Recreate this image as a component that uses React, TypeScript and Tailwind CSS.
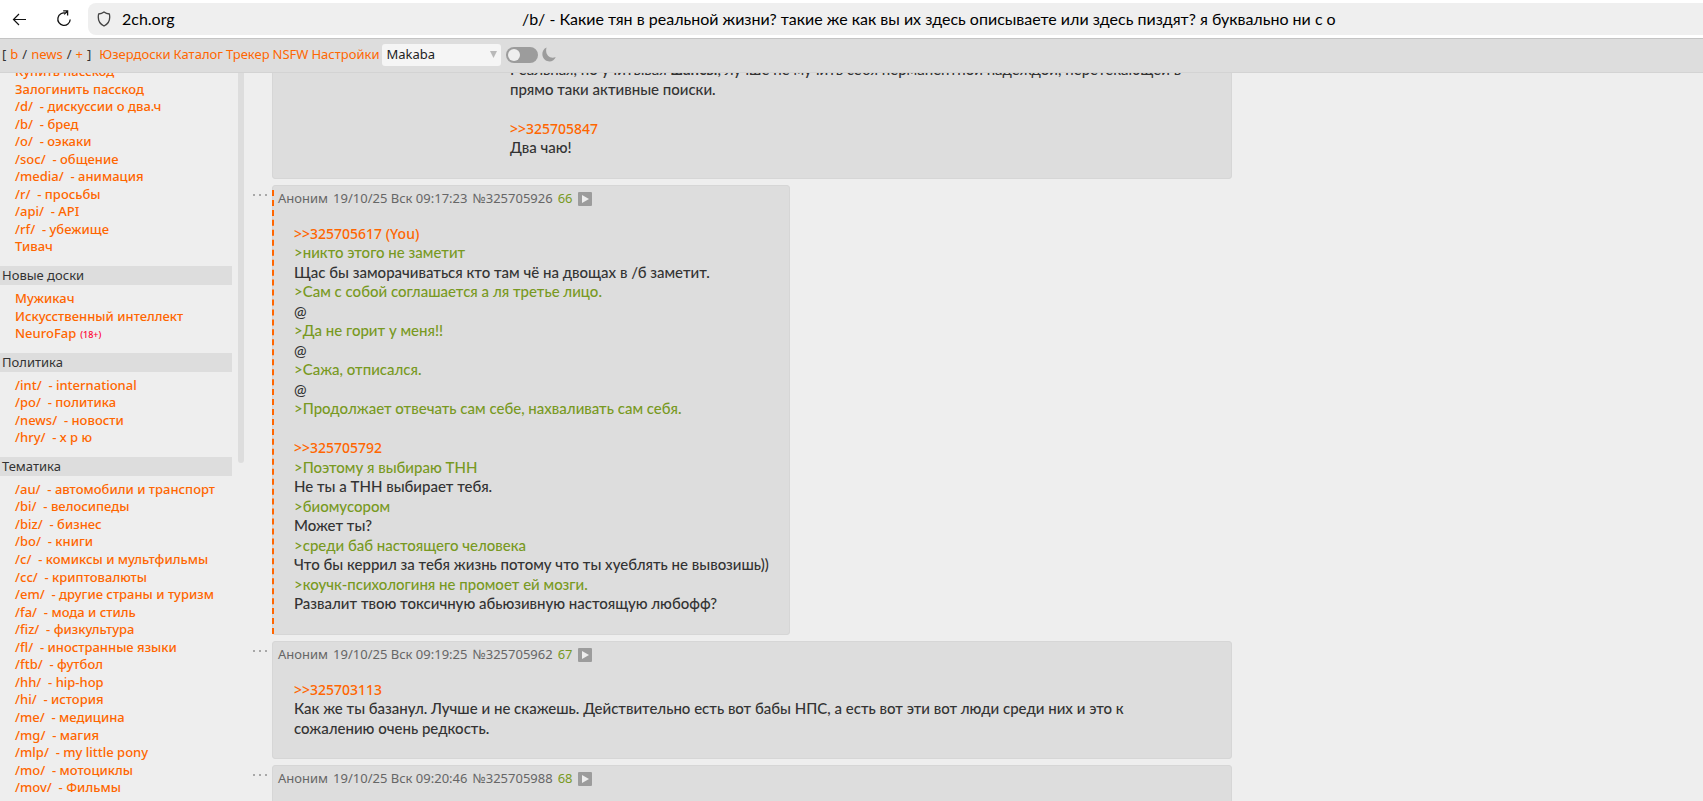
import type { ReactNode } from 'react';

type Board = { name: string; adult?: boolean };
type Section = { title?: string; boards: Board[] };

const list = (...names: string[]): Board[] => names.map((name) => ({ name }));

const sections: Section[] = [
  {
    boards: list(
      'Купить пасскод',
      'Залогинить пасскод',
      '/d/  - дискуссии о два.ч',
      '/b/  - бред',
      '/o/  - оэкаки',
      '/soc/  - общение',
      '/media/  - анимация',
      '/r/  - просьбы',
      '/api/  - API',
      '/rf/  - убежище',
      'Тивач',
    ),
  },
  {
    title: 'Новые доски',
    boards: [{ name: 'Мужикач' }, { name: 'Искусственный интеллект' }, { name: 'NeuroFap', adult: true }],
  },
  {
    title: 'Политика',
    boards: list('/int/  - international', '/po/  - политика', '/news/  - новости', '/hry/  - х р ю'),
  },
  {
    title: 'Тематика',
    boards: list(
      '/au/  - автомобили и транспорт',
      '/bi/  - велосипеды',
      '/biz/  - бизнес',
      '/bo/  - книги',
      '/c/  - комиксы и мультфильмы',
      '/cc/  - криптовалюты',
      '/em/  - другие страны и туризм',
      '/fa/  - мода и стиль',
      '/fiz/  - физкультура',
      '/fl/  - иностранные языки',
      '/ftb/  - футбол',
      '/hh/  - hip-hop',
      '/hi/  - история',
      '/me/  - медицина',
      '/mg/  - магия',
      '/mlp/  - my little pony',
      '/mo/  - мотоциклы',
      '/mov/  - Фильмы',
    ),
  },
];

function BrowserBar() {
  return (
    <header className="flex h-[38px] shrink-0 items-center bg-white pb-px pl-3 font-['Lato','Noto_Sans',sans-serif] text-base text-black">
      <button type="button" aria-label="Назад" className="mr-[28px]">
        <svg width="16" height="16" viewBox="0 0 16 16" fill="none" stroke="#111" strokeWidth="1.2">
          <path d="M14 8.5H1.5M7 3L1.5 8.5L7 14" />
        </svg>
      </button>
      <button type="button" aria-label="Обновить">
        <svg width="18" height="18" viewBox="0 0 18 18" fill="none" stroke="#111" strokeWidth="1.3">
          <path d="M9.8 3.2A6.2 6.2 0 1 0 14.2 9.5M7.2 0.8H11.6V5.4M11.4 1.2L8.2 4.4" />
        </svg>
      </button>
      <div className="ml-[14px] flex h-8 flex-1 items-center rounded-l-lg bg-[#efefef] pl-[9px]">
        <svg width="14" height="16" viewBox="0 0 14 16" fill="none" stroke="#444" strokeWidth="1.3" strokeLinejoin="round">
          <path d="M7 1C5.4 2.3 3.4 2.9 1.6 3C0.7 7.6 2 12.6 7 15C12 12.6 13.3 7.6 12.4 3C10.6 2.9 8.6 2.3 7 1Z" />
        </svg>
        <span className="ml-[11px] w-[400px]">2ch.org</span>
        <span className="whitespace-nowrap">
          /b/ - Какие тян в реальной жизни? такие же как вы их здесь описываете или здесь пиздят? я буквально ни с о
        </span>
      </div>
    </header>
  );
}

function Link({ children }: { children: ReactNode }) {
  return (
    <a href="#" className="text-[#ff6600]">
      {children}
    </a>
  );
}

function NavBar() {
  return (
    <nav className="flex h-[35px] shrink-0 items-center border-y border-t-[#c4c4c4] border-b-[#d3d3d3] bg-[#ddd] pb-[2px] pl-[2px]">
      <div className="flex gap-1 whitespace-nowrap">
        <span>[</span>
        <Link>b</Link>
        <span>/</span>
        <Link>news</Link>
        <span>/</span>
        <Link>+</Link>
        <span>]</span>
      </div>
      <div className="ml-2 flex gap-[3px] whitespace-nowrap">
        <Link>Юзердоски</Link>
        <Link>Каталог</Link>
        <Link>Трекер</Link>
        <Link>NSFW</Link>
        <Link>Настройки</Link>
      </div>
      <div className="relative ml-[3px]">
        <select aria-label="Стиль" className="h-[22px] w-[119px] appearance-none rounded-[3px] bg-[#f5f5f5] pl-1 text-[#222]">
          <option>Makaba</option>
        </select>
        <svg className="pointer-events-none absolute top-[7px] right-1" width="7" height="8" viewBox="0 0 7 8">
          <path d="M0 0H7L3.5 7Z" fill="#b9b9b9" />
        </svg>
      </div>
      <label className="ml-[5px] flex cursor-pointer items-center">
        <input type="checkbox" aria-label="Тёмная тема" className="peer sr-only" />
        <span className="flex h-4 w-8 items-center rounded-full bg-[#9c9c9c] px-[2px] peer-checked:justify-end">
          <span className="size-3 rounded-full bg-[#eee]" />
        </span>
        <svg className="ml-1" width="14" height="15" viewBox="0 0 14 15">
          <path d="M4.6 0.5C-0.6 2.6-1 9.6 3.2 13C7 15.9 12.4 14.2 13.7 10C8 12.6 2.4 7.4 4.6 0.5Z" fill="#9c9c9c" />
        </svg>
      </label>
    </nav>
  );
}

function Sidebar() {
  return (
    <aside className="flex w-[244px] shrink-0 justify-between overflow-hidden text-[13px]">
      <div className="-mt-[10px] w-[232px]">
        {sections.map((section, i) => (
          <section key={i}>
            {section.title && (
              <h2 className="mt-[10px] mb-[5px] h-[19px] bg-[#ddd] pl-[2px] leading-[19px] text-[#333]">
                {section.title}
              </h2>
            )}
            <ul className="pl-[15px] leading-[1.35] font-medium">
              {section.boards.map((board) => (
                <li key={board.name} className="whitespace-pre">
                  <Link>{board.name}</Link>
                  {board.adult && <small className="ml-1 text-[9px] text-[#ff0033]">(18+)</small>}
                </li>
              ))}
            </ul>
          </section>
        ))}
      </div>
      <div className="h-[390px] w-[6px] rounded-b-full bg-[#ddd]" />
    </aside>
  );
}

function Quote({ children }: { children: ReactNode }) {
  return <span className="text-[#789922]">&gt;{children}</span>;
}

function Reply({ children }: { children: ReactNode }) {
  return (
    <a href="#" className="font-['Noto_Sans',sans-serif] text-sm leading-none text-[#ff6600]">
      &gt;&gt;{children}
    </a>
  );
}

type PostProps = {
  time?: string;
  id?: string;
  index?: number;
  own?: boolean;
  wide?: boolean;
  media?: boolean;
  lines: ReactNode[];
};

function Post({ time, id, index, own, wide, media, lines }: PostProps) {
  return (
    <div className="mb-[6px] flex items-start">
      <div className="flex w-[19px] shrink-0 pt-[9px]">
        {id && (
          <button type="button" aria-label="Меню поста" className="flex">
            <svg width="14" height="2" viewBox="0 0 14 2" fill="#a8a8a8">
              <path d="M0 0h2v2H0zM6 0h2v2H6zM12 0h2v2h-2z" />
            </svg>
          </button>
        )}
      </div>
      <article
        className={`relative rounded-[3px] border border-[#d6d6d6] bg-[#ddd] ${wide ? 'w-full max-w-[960px] pr-5' : ''} ${media ? 'pl-[216px]' : ''}`}
      >
        {own && <div className="absolute top-1 bottom-0 -left-px border-l-2 border-dashed border-[#ff6600]" />}
        {id && (
          <div className="flex h-[26px] items-center gap-[5px] pl-[5px] text-[13px] whitespace-nowrap text-[#666]">
            <span>Аноним</span>
            <time>19/10/25 Вск {time}</time>
            <span>№{id}</span>
            <span className="text-[#789922]">{index}</span>
            <button type="button" aria-label="Скрыть пост">
              <svg width="14" height="14" viewBox="0 0 14 14">
                <rect width="14" height="14" rx="1" fill="#9c9c9c" />
                <path d="M4 3L11 7L4 11Z" fill="#eee" />
              </svg>
            </button>
          </div>
        )}
        <div className="mt-3 mb-5 pr-5 pl-[21px] font-['Lato','Noto_Sans',sans-serif] text-[15px] leading-[1.3] font-medium text-[#333]">
          {lines.map((line, i) => (
            <p key={i}>{line || <br />}</p>
          ))}
        </div>
      </article>
    </div>
  );
}

function Thread() {
  return (
    <main className="min-w-0 flex-1 overflow-hidden pl-[9px]">
      <div className="-mt-[26px]">
        <Post
          wide
          media
          lines={[
            <>
              Реальная, но учитывая <strong>шансы</strong>, лучше не мучить себя перманентной надеждой, перетекающей в
              прямо таки активные поиски.
            </>,
            '',
            <Reply>325705847</Reply>,
            'Два чаю!',
          ]}
        />
        <Post
          own
          time="09:17:23"
          id="325705926"
          index={66}
          lines={[
            <Reply>325705617 (You)</Reply>,
            <Quote>никто этого не заметит</Quote>,
            'Щас бы заморачиваться кто там чё на двощах в /б заметит.',
            <Quote>Сам с собой соглашается а ля третье лицо.</Quote>,
            '@',
            <Quote>Да не горит у меня!!</Quote>,
            '@',
            <Quote>Сажа, отписался.</Quote>,
            '@',
            <Quote>Продолжает отвечать сам себе, нахваливать сам себя.</Quote>,
            '',
            <Reply>325705792</Reply>,
            <Quote>Поэтому я выбираю ТНН</Quote>,
            'Не ты а ТНН выбирает тебя.',
            <Quote>биомусором</Quote>,
            'Может ты?',
            <Quote>среди баб настоящего человека</Quote>,
            'Что бы керрил за тебя жизнь потому что ты хуеблять не вывозишь))',
            <Quote>коучк-психологиня не промоет ей мозги.</Quote>,
            'Развалит твою токсичную абьюзивную настоящую любофф?',
          ]}
        />
        <Post
          wide
          time="09:19:25"
          id="325705962"
          index={67}
          lines={[
            <Reply>325703113</Reply>,
            'Как же ты базанул. Лучше и не скажешь. Действительно есть вот бабы НПС, а есть вот эти вот люди среди них и это к сожалению очень редкость.',
          ]}
        />
        <Post wide time="09:20:46" id="325705988" index={68} lines={['']} />
      </div>
    </main>
  );
}

export default function App() {
  return (
    <div className="flex h-screen flex-col overflow-hidden bg-[#eee] font-['Noto_Sans',sans-serif] text-[13px] text-[#333]">
      <BrowserBar />
      <NavBar />
      <div className="flex min-h-0 flex-1">
        <Sidebar />
        <Thread />
      </div>
    </div>
  );
}
